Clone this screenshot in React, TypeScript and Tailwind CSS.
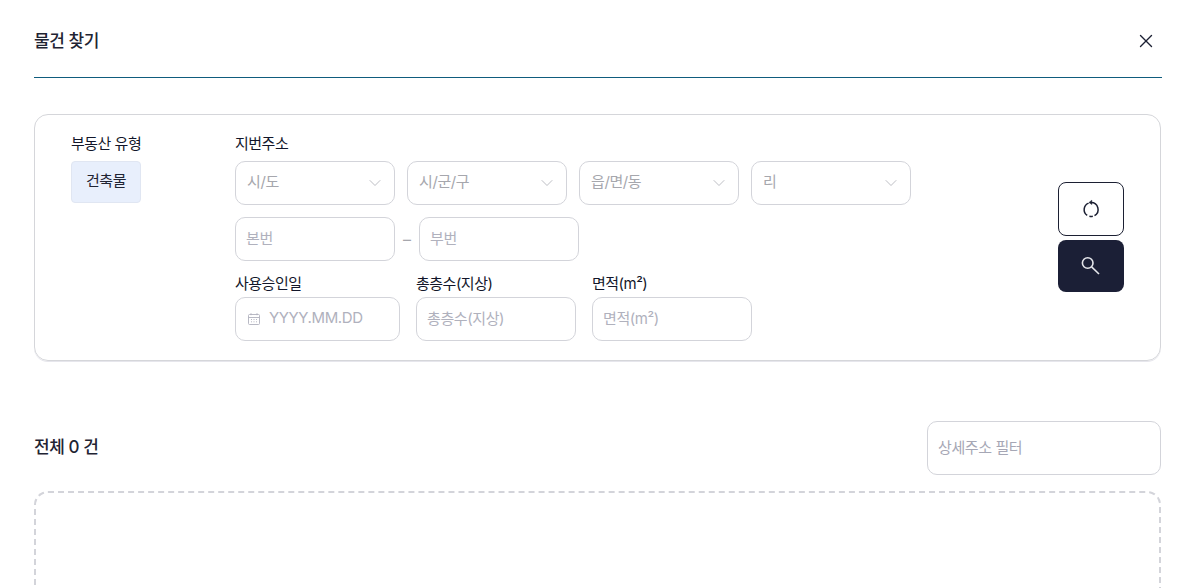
import { ChevronDown, X } from "lucide-react";

const FONT = "font-['Inter','Noto_Sans_CJK_KR',sans-serif]";

const Select = ({ label }: { label: string }) => (
  <div className="flex h-[44px] w-[160px] items-center justify-between rounded-[10px] border border-[#d3d4da] bg-white pl-[11px] pr-[9px]">
    <span className="pb-[2px] text-[15px] tracking-[-0.4px] text-[#a6a7ad]">{label}</span>
    <ChevronDown size={20} strokeWidth={1} className="text-[#b0b1b8]" />
  </div>
);

const TextField = ({ placeholder, width }: { placeholder: string; width: string }) => (
  <input
    type="text"
    placeholder={placeholder}
    className={`h-[44px] ${width} rounded-[10px] border border-[#d3d4da] bg-white px-[10px] pb-[2px] text-[15px] tracking-[-0.4px] outline-none placeholder:text-[#b0b1bd]`}
  />
);

const FieldLabel = ({ children }: { children: string }) => (
  <div className="text-[15px] leading-[20px] tracking-[-0.5px] text-[#12162a]">{children}</div>
);

const App = () => {
  return (
    <div className={`${FONT} h-[588px] w-[1190px] overflow-hidden bg-white pl-[34px] pr-[28px]`}>
      <div className="flex h-[78px] items-center justify-between border-b border-[#0f5c7d] pt-[6px]">
        <h1 className="text-[17px] font-medium tracking-[-0.4px] text-[#1f2433]">물건 찾기</h1>
        <button className="mb-[2px] mr-[5px] text-[#1c2033]">
          <X size={22} strokeWidth={1.5} />
        </button>
      </div>

      <div className="mr-[1px] mt-[36px] flex h-[247px] items-center justify-between rounded-[14px] border border-[#d5d6da] pl-[36px] pr-[36px] shadow-[0_1px_0_#e6e6ec]">
        <div className="flex h-full pt-[19px]">
          <div className="w-[164px]">
            <FieldLabel>부동산 유형</FieldLabel>
            <div className="mt-[7px] flex h-[42px] w-[70px] items-center justify-center rounded-[4px] border border-[#e0e6f2] bg-[#e8effc] pb-[2px] text-[15px] tracking-[-0.4px] text-[#1f2433]">
              건축물
            </div>
          </div>
          <div>
            <FieldLabel>지번주소</FieldLabel>
            <div className="mt-[7px] flex gap-[12px]">
              <Select label="시/도" />
              <Select label="시/군/구" />
              <Select label="읍/면/동" />
              <Select label="리" />
            </div>
            <div className="mt-[12px] flex items-center">
              <TextField placeholder="본번" width="w-[160px]" />
              <span className="w-[24px] text-center text-[16px] text-[#a6a7ad]">–</span>
              <TextField placeholder="부번" width="w-[160px]" />
            </div>
            <div className="mt-[13px] flex gap-[16px]">
              <div>
                <FieldLabel>사용승인일</FieldLabel>
                <div className="mt-[3px] flex h-[44px] w-[165px] items-center gap-[8px] rounded-[10px] border border-[#d3d4da] pl-[11px]">
                  <svg width="14" height="14" viewBox="0 0 14 14" fill="none" stroke="#b0b1bd" strokeWidth="0.9">
                    <rect x="1.5" y="2.5" width="11" height="10" rx="1" />
                    <path d="M1.5 5.5h11M4 1.2v2M10 1.2v2M4 7.5h1M6.5 7.5h1M9 7.5h1M4 9.8h1M6.5 9.8h1M9 9.8h1" />
                  </svg>
                  <span className="pb-[2px] text-[15px] tracking-[-0.4px] text-[#b0b1bd]">YYYY.MM.DD</span>
                </div>
              </div>
              <div>
                <FieldLabel>총층수(지상)</FieldLabel>
                <div className="mt-[3px]">
                  <TextField placeholder="총층수(지상)" width="w-[160px]" />
                </div>
              </div>
              <div>
                <FieldLabel>면적(m²)</FieldLabel>
                <div className="mt-[3px]">
                  <TextField placeholder="면적(m²)" width="w-[160px]" />
                </div>
              </div>
            </div>
          </div>
        </div>

        <div className="mb-[2px] flex flex-col gap-[4px]">
          <button className="flex h-[54px] w-[66px] items-center justify-center rounded-[8px] border border-[#1c2033] bg-white">
            <svg width="22" height="22" viewBox="0 0 22 22" fill="none" stroke="#1c2033" strokeWidth="1.5">
              <path d="M8.6 5.1A7 7 0 0 0 7.2 17.4" />
              <path d="M9.4 18.3a7 7 0 0 0 3.4-.1" />
              <path d="M14.5 17.6A7 7 0 0 0 11 4.5" />
              <path d="M11.8 2.2L9 4.5l2.8 2z" fill="#1c2033" strokeWidth="0.5" />
            </svg>
          </button>
          <button className="flex h-[52px] w-[66px] items-center justify-center rounded-[8px] bg-[#1b1f36]">
            <svg width="22" height="22" viewBox="0 0 22 22" fill="none" stroke="#e4e5ea" strokeWidth="1.6">
              <circle cx="7.7" cy="8" r="5.3" />
              <path d="M11.6 11.9L19 19" />
            </svg>
          </button>
        </div>
      </div>

      <div className="mt-[60px] flex h-[54px] items-center justify-between">
        <span className="text-[17px] font-medium tracking-[-0.4px] text-[#1f2433]">전체 0 건</span>
        <input
          type="text"
          placeholder="상세주소 필터"
          className="mr-[1px] h-[54px] w-[234px] rounded-[10px] border border-[#d3d4da] px-[10px] pb-[2px] text-[15px] tracking-[-0.4px] outline-none placeholder:text-[#a6a7b5]"
        />
      </div>

      <div className="mr-[1px] mt-[16px] h-[200px] rounded-[14px] border-2 border-dashed border-[#d3d4da]" />
    </div>
  );
};

export default App;
